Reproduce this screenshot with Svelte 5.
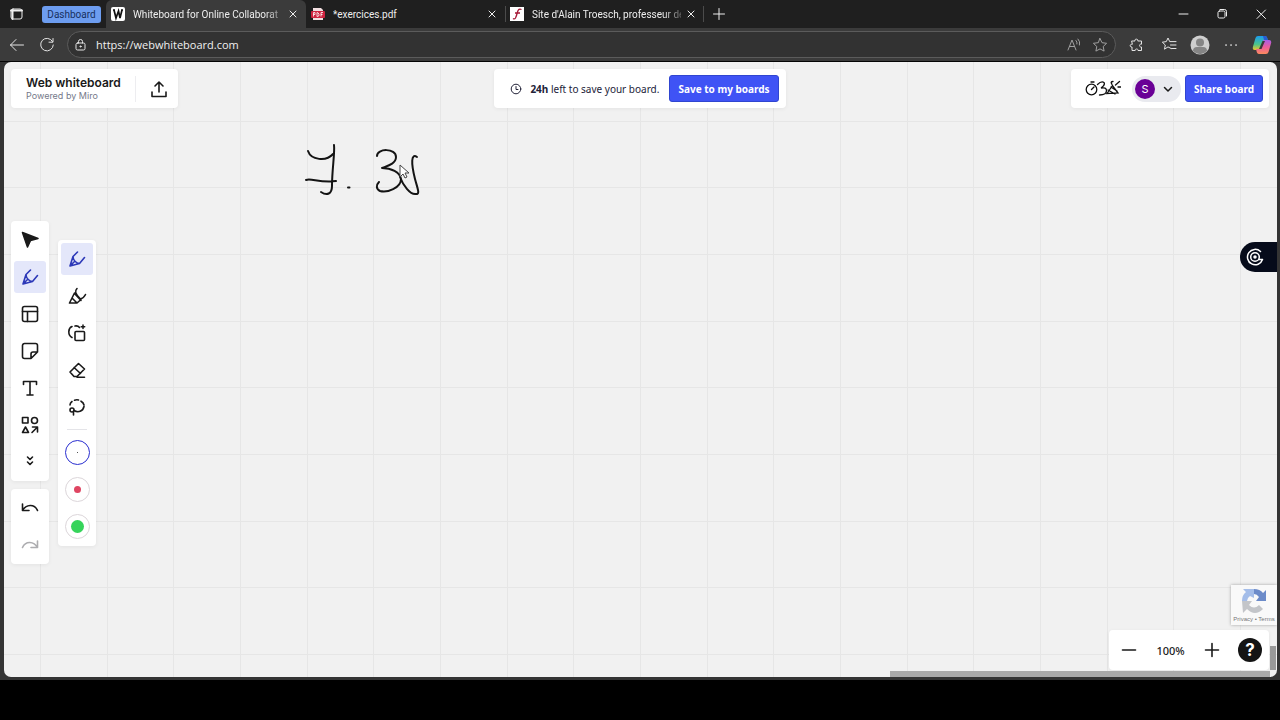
<script>

    let activeTool  = $state( 'pen' );
    let activeBrush = $state( 'pen' );
    let activeInk   = $state( 0 );
    let address     = $state( 'https://webwhiteboard.com' );
    let zoom        = $state( 100 );



    // Icons on a 20 x 20 grid
    const icons =
    {
        'tabs':      '<rect x="5" y="5" width="11" height="10" rx="2"/><path d="M5 6.5h11M6.5 6v9" stroke-width="2"/>',
        'close':     '<path d="M7 7l6 6M13 7l-6 6"/>',
        'plus':      '<path d="M4.500 10h11M10 4.500v11"/>',
        'minimize':  '<path d="M6 10h9"/>',
        'restore':   '<rect x="6" y="7" width="7" height="7" rx="1.5"/><path d="M8 5.5h4.500a2 2 0 0 1 2 2V12"/>',
        'exit':      '<path d="M6 6l8.500 8.500M14.500 6L6 14.500"/>',
        'back':      '<path d="M16.500 10h-13M9 4.500L3.500 10 9 15.500"/>',
        'reload':    '<path d="M15.500 6.500A6.300 6.300 0 1 0 16.300 10M16 3.500v3.700h-4"/>',
        'lock':      '<rect x="5" y="8" width="9" height="7" rx="1.500"/><path d="M7.500 8V6.500a2 2 0 0 1 4 0V8"/><circle cx="9.500" cy="11.500" r=".6" fill="currentColor"/>',
        'read':      '<path d="M3 15L7 5l4 10M4.500 11.500h5M11 5.500q1.500 1.500 1 3.500M13 4q2.500 2.500 1.500 6"/>',
        'star':      '<path d="M10 3.500l2 4.200 4.600.6-3.400 3.200.9 4.600L10 13.900l-4.100 2.200.9-4.600-3.400-3.200 4.600-.6z"/>',
        'puzzle':    '<path d="M4 6h3c-.8-2.500 3.500-2.500 2.800 0H13.500v3.200c-2.600-.8-2.600 3.400 0 2.800V15.500H10c.5-2-3.300-2-2.800 0H4v-3.500c-2.500.6-2.500-3.400 0-2.800z"/>',
        'favorites': '<path d="M12 13.500l-3-1.600-3.500 2.300.8-4.200-3-2.800 4-.6L9 3l1.700 3.600H17M11.500 10H17M12.500 13.500H17"/>',
        'more':      '<path d="M5 10h.1M10 10h.1M15 10h.1" stroke-width="1.700"/>',
        'export':    '<path d="M3 13v4.500h14V13M10 13V3M6 7l4-4 4 4"/>',
        'clock':     '<circle cx="10" cy="10" r="4.800"/><path d="M10 7.500v3h2"/>',
        'down':      '<path d="M6.500 8.500L10 12l3.500-3.500"/>',
        'cursor':    '<path d="M2.500 2.500L18 8.500l-7.500 2-3 6.500z" fill="currentColor"/>',
        'pen':       '<path d="M10.500 3L6 7.500C6 11 9 14.500 12.500 14.500L17.500 8.500M6 7.500L3 17l9.500-2.500M3 17l4.500-4.500"/>',
        'marker':    '<path d="M10 2.500C7.500 5 8 8 13.500 13c2-.5 4-2.500 5-4.500M7.500 7L2.500 17h7.500l4-3.500M7.500 7.500l6.500 7M5 12l4.500 4.500"/>',
        'layout':    '<rect x="2.500" y="2.500" width="15" height="15" rx="2"/><path d="M2.500 7.500h15M7.500 7.500v10"/>',
        'sticky':    '<path d="M2.500 4.500a2 2 0 0 1 2-2h11a2 2 0 0 1 2 2V11l-6.500 6.500H4.500a2 2 0 0 1-2-2zM17.500 11H13a2 2 0 0 0-2 2v4.500"/>',
        'text':      '<path d="M3.500 6.500v-3h13v3M10 3.500v13M7 17h6"/>',
        'shapes':    '<rect x="2.500" y="2.500" width="5.500" height="5.500"/><circle cx="14.500" cy="5.500" r="3"/><path d="M5.500 12L2.500 17.500h6zM12 17.500l5.500-5.500M12.500 12h5v5"/>',
        'expand':    '<path d="M7.500 5L10 7.500l2.500-2.500M7.500 10L10 12.500l2.500-2.500"/>',
        'undo':      '<path d="M2.500 6v6.500h6.500M2.500 12.500C6 6 14.500 5.500 17.500 12.500"/>',
        'redo':      '<path d="M17.500 6v6.500h-6.500M17.500 12.500C14 6 5.500 5.500 2.500 12.500"/>',
        'convert':   '<rect x="8" y="8.500" width="9.500" height="9" rx="1"/><path d="M5 14.500C.5 12 1 5 5 3.500M8 3q3-.5 4.500 1.500"/><path d="M16 2v3.500M14.200 3.700h3.500" stroke-width="1.500"/>',
        'eraser':    '<path d="M3 12l8.500-8.500 6 5.500-7.500 7.500H7zM7 7.500l6.500 6M10 17.300h7.500"/>',
        'lasso':     '<path d="M3 8q0-2 2-3.500M7.500 3.200q2-.7 4-.2M14 4.200q2.500 1.300 3 3.800M17 9.500C16 14.500 11 16 7 13.500"/><circle cx="5" cy="13" r="2"/><path d="M6.500 14v4"/>'
    }
    ;

    const tools   = [ 'cursor', 'pen', 'layout', 'sticky', 'text', 'shapes', 'expand' ];
    const brushes = [ 'pen', 'marker', 'convert', 'eraser', 'lasso' ];

    const inks =
    [
        { 'name': 'Thin black',  'color': '#1a1a1a', 'size': 1 },
        { 'name': 'Medium red',  'color': '#df4562', 'size': 7 },
        { 'name': 'Thick green', 'color': '#36d45b', 'size': 13 }
    ]
    ;

</script>

{#snippet icon ( name )}
    <svg class="icon" viewBox="0 0 20 20" aria-hidden="true">{@html icons[name]}</svg>
{/snippet}

<div class="desktop">
    <div class="window">
        <div class="tab-strip">
            <button class="tab-actions" aria-label="Tab actions">{@render icon( 'tabs' )}</button>
            <button class="tab-group">Dashboard</button>

            <div class="tab active">
                <svg class="favicon" viewBox="0 0 14 14" aria-hidden="true">
                    <rect width="14" height="14" rx="2" fill="#fff"/>
                    <path d="M2 3h2M3 3l2 8 2.500-7L9 11l2-8M10 3h2" fill="none" stroke="#111" stroke-width="1.700"/>
                </svg>
                <span class="tab-title fade">Whiteboard for Online Collaborat</span>
                <button aria-label="Close tab">{@render icon( 'close' )}</button>
            </div>

            <div class="tab">
                <svg class="favicon" viewBox="0 0 14 14" aria-hidden="true">
                    <path d="M2 1h8l2 2v10H2z" fill="#f3dfe1"/>
                    <rect y="4" width="14" height="7" rx="1" fill="#cf2440"/>
                    <path d="M2.500 9.500v-4h1.500v2H2.500M6 5.500v4q2.500 0 2-2t-2-2M10 9.500v-4h2M10 7.500h1.500" fill="none" stroke="#fff" stroke-width=".8"/>
                </svg>
                <span class="tab-title">*exercices.pdf</span>
                <button aria-label="Close tab">{@render icon( 'close' )}</button>
            </div>

            <div class="tab divided">
                <svg class="favicon" viewBox="0 0 14 14" aria-hidden="true">
                    <rect width="14" height="14" fill="#fff"/>
                    <path d="M11.500 2.500Q8.500 1 7.500 5T5.500 11q-1 1.500-2.500.5M5 6h5" fill="none" stroke="#a51735" stroke-width="1.300"/>
                </svg>
                <span class="tab-title fade">Site d'Alain Troesch, professeur de</span>
                <button aria-label="Close tab">{@render icon( 'close' )}</button>
            </div>

            <button class="new-tab" aria-label="New tab">{@render icon( 'plus' )}</button>

            <div class="window-controls">
                <button aria-label="Minimize">{@render icon( 'minimize' )}</button>
                <button aria-label="Restore">{@render icon( 'restore' )}</button>
                <button aria-label="Close">{@render icon( 'exit' )}</button>
            </div>
        </div>

        <div class="navigation">
            <button aria-label="Back">{@render icon( 'back' )}</button>
            <button aria-label="Reload">{@render icon( 'reload' )}</button>

            <div class="address-bar">
                {@render icon( 'lock' )}
                <input type="text" aria-label="Address" spellcheck="false" bind:value={ address }>
                <button class="dim" aria-label="Read aloud">{@render icon( 'read' )}</button>
                <button class="dim" aria-label="Add to favorites">{@render icon( 'star' )}</button>
            </div>

            <div class="browser-actions">
                <button aria-label="Extensions">{@render icon( 'puzzle' )}</button>
                <button aria-label="Favorites">{@render icon( 'favorites' )}</button>
                <button aria-label="Profile">
                    <svg class="icon" viewBox="0 0 20 20" aria-hidden="true">
                        <circle cx="10" cy="10" r="9.500" fill="#cfcfcf" stroke="none"/>
                        <circle cx="10" cy="7.500" r="4" fill="#858585" stroke="none"/>
                        <path d="M3 16q0-4 4-4h6q4 0 4 4-7 6.500-14 0z" fill="#858585" stroke="none"/>
                    </svg>
                </button>
                <button aria-label="More">{@render icon( 'more' )}</button>
                <button aria-label="Copilot">
                    <svg class="icon" viewBox="0 0 20 20" aria-hidden="true">
                        <defs>
                            <linearGradient id="cool" x1="0" y1="0" x2="0" y2="1">
                                <stop offset="0" stop-color="#1b9cf0"/>
                                <stop offset=".6" stop-color="#4bc48a"/>
                                <stop offset="1" stop-color="#f1c52c"/>
                            </linearGradient>
                            <linearGradient id="warm" x1="0" y1="0" x2="0" y2="1">
                                <stop offset="0" stop-color="#a65de8"/>
                                <stop offset=".5" stop-color="#ec5d9c"/>
                                <stop offset="1" stop-color="#fb8a5c"/>
                            </linearGradient>
                        </defs>
                        <path d="M6 1h7q2 0 2.500 3l.5 2h-4L8.500 15H3q-3 0-2-3.500L3.500 3Q4 1 6 1z" fill="url(#cool)" stroke="none"/>
                        <path d="M14 19H7q-2 0-2.500-3L4 14h4l3.500-9H17q3 0 2 3.500L16.500 17q-.5 2-2.500 2z" fill="url(#warm)" stroke="none"/>
                        <path d="M10.500 6h2.500l-3.500 8H7z" fill="#3b3b3b" stroke="none"/>
                        <path d="M11 1h2q2 0 2.500 3l.5 1h-4z" fill="#285bd3" stroke="none"/>
                    </svg>
                </button>
            </div>
        </div>

        <main class="board">
            <svg class="canvas" role="img" aria-label="Handwritten notes">
                <defs>
                    <pattern id="grid" x="36" y="-8" width="200" height="200" patternUnits="userSpaceOnUse">
                        <path d="M.5 0v200M67.500 0v200M133.500 0v200M0 .5h200M0 67.500h200M0 133.500h200"/>
                    </pattern>
                </defs>
                <rect width="100%" height="100%" fill="url(#grid)"/>
                <g class="ink">
                    <path d="M304 89c3 9 18 11 25 3M330 83c1 8-2 24-2 41 0 8-5 10-11 6M302 118c5-2 14 3 30 1M344 125.500h1.500"/>
                    <path d="M373 94c0-8 19-8 19 1 0 7-9 9-14 11 9 0 18 4 19 11 0 9-14 14-21 12-4-2-4-6-1-9M413 95c-6-4-6 6-2 22 3 11 5 15 1 15-6 1-13-9-16-17"/>
                </g>
                <path class="pointer" d="M396 103v12l3-3 2 4 2-1-2-4h4z"/>
            </svg>

            <header class="top-bar">
                <div class="panel brand">
                    <div class="brand-name">
                        <strong>Web whiteboard</strong>
                        <small>Powered by Miro</small>
                    </div>
                    <button class="export" aria-label="Export this board">{@render icon( 'export' )}</button>
                </div>

                <div class="panel save">
                    {@render icon( 'clock' )}
                    <span><b>24h</b> left to save your board.</span>
                    <button class="primary">Save to my boards</button>
                </div>

                <div class="panel share">
                    <button class="activities" aria-label="Activities">
                        <svg class="doodle" viewBox="0 0 36 20" aria-hidden="true">
                            <circle cx="6.500" cy="10.500" r="5.300"/>
                            <path d="M6.500 10.500l2.500-2.500M6 3h3M12.500 5.500q4-4 6.500-2 1.500 2.500-3 5.500 5.500-1 5.500 2.500 0 4.500-7 4.500M22 14.500l5.500-8 5.500 7.500zM23 11l7 4M26 8l6 4M27 5.500q-2-3 1-3M30.500 6l4-3.500M33 8h3"/>
                        </svg>
                    </button>
                    <button class="account" aria-label="Account S">
                        <span class="avatar">S</span>
                        {@render icon( 'down' )}
                    </button>
                    <button class="primary">Share board</button>
                </div>
            </header>

            <div class="toolbars">
                <div class="stack">
                    <div class="panel tools">
                        {#each tools as tool}
                            <button class:selected={ activeTool === tool } aria-label={ tool } onclick={ () => activeTool = tool }>
                                {@render icon( tool )}
                            </button>
                        {/each}
                    </div>
                    <div class="panel tools">
                        <button aria-label="Undo">{@render icon( 'undo' )}</button>
                        <button aria-label="Redo" disabled>{@render icon( 'redo' )}</button>
                    </div>
                </div>

                <div class="panel tools">
                    {#each brushes as brush}
                        <button class:selected={ activeBrush === brush } aria-label={ brush } onclick={ () => activeBrush = brush }>
                            {@render icon( brush )}
                        </button>
                    {/each}
                    <hr>
                    {#each inks as ink, i}
                        <button class:current={ activeInk === i } aria-label={ ink.name } onclick={ () => activeInk = i }>
                            <span class="ring">
                                <span class="dot" style="width: { ink.size }px; height: { ink.size }px; background: { ink.color }"></span>
                            </span>
                        </button>
                    {/each}
                </div>
            </div>

            <button class="side-button" aria-label="Open assistant">
                <svg class="icon" viewBox="0 0 20 20" aria-hidden="true">
                    <path d="M15.500 4.500A7.700 7.700 0 1 0 17.500 12.500h-3.500"/>
                    <circle cx="10" cy="10" r="4.300"/>
                    <circle cx="10" cy="10" r="1" fill="currentColor"/>
                </svg>
            </button>

            <div class="captcha">
                <svg viewBox="0 0 26 26" aria-hidden="true">
                    <path d="M13 1q6 0 9 4l3-3v11H15l3-4q-2-3-5-3z" fill="#6c8bc9"/>
                    <path d="M1 13Q1 7 5 4L2 1h11v9L9 8q-3 2-3 5z" fill="#a4bde9"/>
                    <path d="M1 13h10l-3 4q5 5 10 0l4 4q-8 8-16 0l-4 4z" fill="#c3c5c9"/>
                </svg>
                <span><a href="#privacy">Privacy</a> • <a href="#terms">Terms</a></span>
            </div>

            <div class="panel zoom">
                <button aria-label="Zoom out" onclick={ () => zoom -= 10 }>
                    <svg class="icon" viewBox="0 0 20 20"><path d="M3.500 10h13"/></svg>
                </button>
                <output>{ zoom }%</output>
                <button aria-label="Zoom in" onclick={ () => zoom += 10 }>
                    <svg class="icon" viewBox="0 0 20 20"><path d="M3.500 10h13M10 3.500v13"/></svg>
                </button>
                <button class="help" aria-label="Help">?</button>
            </div>

            <div class="scroll-x"></div>
            <div class="scroll-y"></div>
        </main>
    </div>
</div>

<style>

    :global(body)
    {
        margin: 0;
        background: #000000;
    }

    .desktop
    {
        box-sizing: border-box;
        display: flex;
        height: 100vh;
        padding-bottom: 40px;
        font-family: "Noto Sans", sans-serif;
        font-size: 11px;
    }

    .window
    {
        flex: 1;
        display: flex;
        flex-direction: column;
        min-width: 0;
        background: #343434;
    }

    button
    {
        display: flex;
        align-items: center;
        justify-content: center;
        flex: none;
        padding: 0;
        border: 0;
        background: none;
        color: inherit;
        font: inherit;
        cursor: pointer;
    }

    .icon
    {
        display: block;
        flex: none;
        width: 20px;
        height: 20px;
        fill: none;
        stroke: currentColor;
        stroke-width: 1;
        stroke-linecap: round;
        stroke-linejoin: round;
    }

    /* Browser chrome */

    .tab-strip
    {
        display: flex;
        align-items: center;
        height: 28px;
        background: #1f1f1f;
        color: #eeeeee;
        font-family: Roboto, sans-serif;
        font-size: 10px;
    }

    .tab-actions
    {
        width: 32px;
        margin-right: 10px;
    }

    .tab-group
    {
        width: 59px;
        height: 17px;
        margin-right: 5px;
        border-radius: 3px;
        background: #6d9df0;
        color: #17305e;
    }

    .tab
    {
        box-sizing: border-box;
        display: flex;
        align-items: center;
        flex: 0 1 199px;
        min-width: 0;
        height: 28px;
        padding: 0 3px 0 5px;
    }

    .tab.active
    {
        flex-basis: 200px;
        border-radius: 6px 6px 0 0;
        background: #3b3b3b;
    }

    .tab.divided
    {
        height: 16px;
        padding: 0 2px 0 4px;
        border: solid #4b4b4b;
        border-width: 0 1px;
    }

    .favicon
    {
        flex: none;
        width: 14px;
        height: 14px;
        margin-right: 8px;
    }

    .tab-title
    {
        flex: 1;
        overflow: hidden;
        white-space: nowrap;
    }

    .fade
    {
        mask-image: linear-gradient( to right, #000 88%, #0004 );
    }

    .new-tab
    {
        width: 30px;
    }

    .window-controls
    {
        display: flex;
        margin-left: auto;
    }

    .window-controls button
    {
        width: 39px;
    }

    .navigation
    {
        box-sizing: border-box;
        display: flex;
        align-items: center;
        gap: 10px;
        height: 34px;
        padding: 0 8px 0 7px;
        border-bottom: 1px solid #050505;
        background: #3b3b3b;
        color: #e4e4e4;
    }

    .address-bar
    {
        box-sizing: border-box;
        display: flex;
        align-items: center;
        flex: 1;
        gap: 5px;
        height: 27px;
        padding: 0 5px 0 3px;
        border: 1px solid #5b5b5b;
        border-radius: 14px;
        background: #323232;
    }

    .address-bar input
    {
        flex: 1;
        min-width: 0;
        padding: 0;
        border: 0;
        outline: 0;
        background: none;
        color: #f0f0f0;
        font-family: "Open Sans", sans-serif;
        font-size: 11px;
    }

    .dim
    {
        color: #a0a0a0;
    }

    .browser-actions
    {
        display: flex;
        gap: 11px;
        padding-left: 2px;
    }

    /* Board */

    .board
    {
        position: relative;
        display: flex;
        flex-direction: column;
        flex: 1;
        margin: 0 3px 3px 4px;
        overflow: hidden;
        border-radius: 7px;
        background: #f1f1f1;
        color: #1a1a1a;
    }

    .canvas
    {
        position: absolute;
        width: 100%;
        height: 100%;
        fill: none;
    }

    .canvas pattern
    {
        stroke: #e6e6e6;
    }

    .ink
    {
        stroke: #141414;
        stroke-width: 2;
        stroke-linecap: round;
        stroke-linejoin: round;
    }

    .pointer
    {
        fill: #ffffff;
        stroke: #444444;
    }

    .panel
    {
        position: relative;
        box-sizing: border-box;
        display: flex;
        border-radius: 4px;
        background: #ffffff;
        box-shadow: 0 1px 4px #0000000f;
    }

    .top-bar
    {
        display: grid;
        grid-template-columns: 1fr auto 1fr;
        height: 39px;
        padding: 7px 8px 0 7px;
        font-size: 10px;
    }

    .top-bar .panel
    {
        align-items: center;
    }

    .brand
    {
        justify-self: start;
        padding-left: 15px;
    }

    .brand-name
    {
        display: flex;
        flex-direction: column;
        padding-right: 14px;
        border-right: 1px solid #ededf0;
        font-family: Inter, sans-serif;
    }

    .brand-name strong
    {
        font-size: 12px;
        font-weight: 600;
        line-height: 14px;
    }

    .brand-name small
    {
        color: #75798a;
        font-size: 9px;
        line-height: 12px;
    }

    .export
    {
        width: 42px;
        padding-left: 4px;
    }

    .export .icon,
    .tools .icon,
    .zoom .icon
    {
        stroke-width: 1.6;
    }

    .save
    {
        gap: 4px;
        padding: 0 7px 0 12px;
        color: #222238;
    }

    .save span
    {
        margin-right: 6px;
    }

    .primary
    {
        height: 27px;
        padding: 0 8px;
        border: 1px solid #3045d0;
        border-radius: 3px;
        background: #3f53f5;
        color: #ffffff;
        font-weight: 700;
    }

    .share
    {
        justify-self: end;
        gap: 4px;
        padding: 0 6px 0 14px;
    }

    .activities
    {
        margin-right: 7px;
    }

    .doodle
    {
        width: 36px;
        height: 20px;
        fill: none;
        stroke: #111111;
        stroke-width: 1.3;
        stroke-linecap: round;
    }

    .account
    {
        gap: 3px;
        height: 26px;
        padding: 0 3px;
        border-radius: 13px;
        background: #e9eaef;
    }

    .account .icon
    {
        stroke-width: 1.5;
    }

    .avatar
    {
        width: 20px;
        border-radius: 50%;
        background: #6a0096;
        color: #ffffff;
        font-family: Inter, sans-serif;
        font-size: 11px;
        line-height: 20px;
    }

    .toolbars
    {
        display: flex;
        align-items: center;
        flex: 1;
        gap: 9px;
        padding-left: 7px;
    }

    .stack
    {
        display: flex;
        flex-direction: column;
        gap: 8px;
    }

    .tools
    {
        flex-direction: column;
        gap: 5px;
        padding: 3px;
    }

    .tools button
    {
        width: 32px;
        height: 32px;
        border-radius: 3px;
    }

    .tools .selected
    {
        background: #e4e7fa;
        color: #2c38b8;
    }

    .tools button:disabled
    {
        color: #adadb0;
    }

    .tools hr
    {
        width: 20px;
        margin: 1px auto 2px;
        border: 0;
        border-top: 1px solid #e4e4e8;
    }

    .ring
    {
        box-sizing: border-box;
        display: flex;
        align-items: center;
        justify-content: center;
        width: 25px;
        height: 25px;
        border: 1px solid #dcd6da;
        border-radius: 50%;
    }

    .current .ring
    {
        border: 1px solid #2a2fd0;
    }

    .dot
    {
        border-radius: 50%;
    }

    .side-button
    {
        position: absolute;
        top: 180px;
        right: 0;
        width: 37px;
        height: 30px;
        padding-right: 8px;
        border-radius: 15px 0 0 15px;
        background: #060b1a;
        color: #ffffff;
    }

    .side-button .icon
    {
        stroke-width: 1.5;
    }

    .captcha
    {
        position: absolute;
        right: 0;
        bottom: 52px;
        display: flex;
        flex-direction: column;
        align-items: center;
        width: 46px;
        padding: 3px 0 1px;
        background: #f9f9f9;
        box-shadow: 0 0 3px #a0a0a0;
        color: #777777;
        font-family: "Liberation Sans", sans-serif;
        font-size: 6px;
        line-height: 10px;
        white-space: nowrap;
    }

    .captcha svg
    {
        width: 26px;
        height: 26px;
    }

    .captcha a
    {
        color: inherit;
        text-decoration: none;
    }

    .zoom
    {
        position: absolute;
        right: 8px;
        bottom: 7px;
        align-items: center;
        height: 40px;
        padding: 0 7px 0 10px;
    }

    .zoom output
    {
        width: 63px;
        text-align: center;
        font-weight: 500;
    }

    .zoom .help
    {
        width: 24px;
        height: 24px;
        margin-left: 16px;
        border-radius: 50%;
        background: #141414;
        color: #ffffff;
        font-family: Inter, sans-serif;
        font-size: 17px;
        font-weight: 700;
    }

    .scroll-x
    {
        position: absolute;
        right: 7px;
        bottom: 0;
        width: 380px;
        height: 6px;
        background: #a9a9a9;
    }

    .scroll-y
    {
        position: absolute;
        right: 1px;
        bottom: 7px;
        width: 6px;
        height: 24px;
        background: #999999;
    }

</style>
